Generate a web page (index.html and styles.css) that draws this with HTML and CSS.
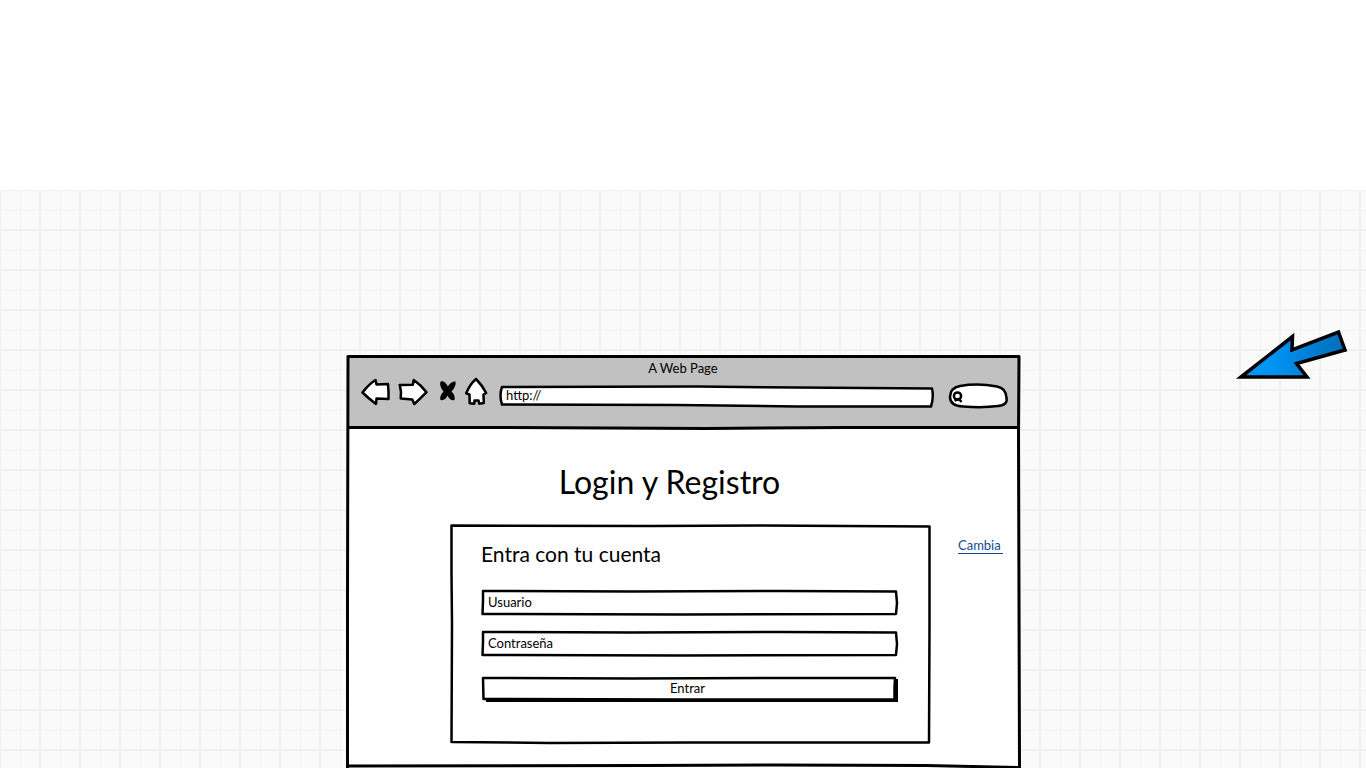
FILE: index.html
```html
<!DOCTYPE html>
<html lang="es">
<head>
<meta charset="utf-8">
<title>Login y Registro</title>
<link rel="stylesheet" href="styles.css">
</head>
<body>
<header class="top-space"></header>
<main class="canvas">
  <section class="window">
    <svg class="frame" viewBox="0 0 674 413" preserveAspectRatio="none" aria-hidden="true">
      <path fill="#fff" d="M2 2H673V413H2Z"/>
      <path fill="#c1c1c1" d="M2 2H673V73H2Z"/>
      <path class="line thick" d="M1.500 414V250L2 1.500H673L672.500 80L673.500 414M2 72.500H160L360 73.500L500 72.500H673M2 411L300 410.500L430 410L580 410.500L673 412.500"/>
    </svg>
    <div class="toolbar">
      <p class="window-title">A Web Page</p>
      <div class="controls">
        <button class="tool" type="button" aria-label="Atrás">
          <svg width="29" height="32" viewBox="0 0 29 32"><path class="shape" d="M1.500 16.500Q8 8 14.500 4L15.500 8.500L27 8L27.500 16V23L15.500 22.500L15 28Q7 22 1.500 16.500Z"/></svg>
        </button>
        <button class="tool" type="button" aria-label="Adelante">
          <svg width="30" height="32" viewBox="0 0 30 32"><path class="shape" d="M1.800 9L14.800 8.700L15.700 4Q23 9 28.500 16.200Q22 23 16.300 28L14.300 23.500L2.700 22.500L3 16Z"/></svg>
        </button>
        <button class="tool" type="button" aria-label="Detener">
          <svg width="21" height="32" viewBox="0 0 21 32"><path d="M4.500 5.500Q9 4.500 11.800 10.500Q15.500 5 19.500 5.500Q20.500 10 15.500 15.500Q19.500 19.500 18.500 24Q14.500 25.500 11.500 19.500Q9 25 4.500 24Q3 20.500 7.500 15.500Q3 10 4.500 5.500Z"/></svg>
        </button>
        <button class="tool" type="button" aria-label="Inicio">
          <svg width="24" height="32" viewBox="0 0 24 32"><path class="shape" d="M11 3Q17 9 21.200 17L18.500 18.500L18.800 27L14.300 27.700L13.500 24.500H9.500L9.300 27.700L4.700 27.300L4.500 18.500L1.200 17.300Q5 8 11 3Z"/></svg>
        </button>
        <div class="address">
          <svg class="frame" viewBox="0 0 443 32" preserveAspectRatio="none" aria-hidden="true"><path class="line" fill="#fff" d="M5 11L200 10.500L300 11.500L435 12.500Q437 21 434 30.500L300 30.500L180 29L5 28.500Q2 19 5 11Z"/></svg>
          <input class="text" type="text" value="http://" aria-label="Dirección">
        </div>
        <div class="search">
          <svg class="frame" viewBox="0 0 61 32" preserveAspectRatio="none" aria-hidden="true"><path class="line" fill="#fff" d="M2 21Q2 12 12 10Q30 7 49 10.500Q58 12 58.500 22Q60 29 50 30Q35 32 15 30.500Q2 30 2 21Z"/><circle class="line" cx="9.500" cy="20" r="3.600"/><path class="line" d="M6.500 24.500L11 23L13.500 26"/></svg>
          <input class="text" type="search" aria-label="Buscar">
        </div>
      </div>
    </div>
    <h1 class="title">Login y Registro</h1>
    <div class="content">
      <form class="card">
        <svg class="frame" viewBox="0 0 481 220" preserveAspectRatio="none" aria-hidden="true"><path class="line" d="M1.500 1.500L200 2L310 1.500L479.500 2.500V100L479 218.500L240 218.500L100 219L1.500 218L2 100L1.500 50Z"/></svg>
        <h2 class="subtitle">Entra con tu cuenta</h2>
        <div class="field">
          <svg class="frame" viewBox="0 0 417 26" preserveAspectRatio="none" aria-hidden="true"><path class="line" d="M2 2L150 2.500L300 2L415 2.500L416 14L415 25L200 25.500L1.500 25L2 12Z"/></svg>
          <input class="text" type="text" placeholder="Usuario" aria-label="Usuario">
        </div>
        <div class="field">
          <svg class="frame" viewBox="0 0 417 26" preserveAspectRatio="none" aria-hidden="true"><path class="line" d="M2 2L150 2.500L300 2L415 2.500L416 14L415 25L200 25.500L1.500 25L2 12Z"/></svg>
          <input class="text" type="password" placeholder="Contraseña" aria-label="Contraseña">
        </div>
        <button class="submit" type="submit">
          <svg class="frame" viewBox="0 0 417 26" preserveAspectRatio="none" aria-hidden="true"><path d="M5 22H413V3H417V26H5Z"/><path class="line" fill="#fff" d="M2 2L150 2.500L300 2L414 2L413.500 12V23.500L200 23.500L2.500 23Z"/></svg>
          <span class="submit-label">Entrar</span>
        </button>
      </form>
      <a class="link" href="#registro">Cambia</a>
    </div>
  </section>
  <svg class="pointer" width="112" height="52" viewBox="0 0 112 52" aria-hidden="true">
    <defs><linearGradient id="blue" x1="0" y1="0" x2="1" y2="0"><stop offset="0.3" stop-color="#0094f5"/><stop offset="1" stop-color="#006db8"/></linearGradient></defs>
    <path d="M5 49L56.500 8.500L56 22L102.500 4L109 22L60.500 35.500L71 49Z" fill="url(#blue)" stroke="#000" stroke-width="3.500"/>
  </svg>
</main>
</body>
</html>
```
FILE: styles.css
```css
* { box-sizing: border-box; }
body {
  margin: 0;
  background: #fff;
  color: #000;
  font-family: Lato, "Open Sans", sans-serif;
  font-size: 13px;
  line-height: 16px;
}
.top-space { height: 190px; }
.canvas {
  position: relative;
  overflow: hidden;
  min-height: calc(100vh - 190px);
  padding-top: 165px;
  background-color: #fafafa;
  background-image:
    linear-gradient(#f0f0f0 2px, transparent 2px),
    linear-gradient(90deg, #f0f0f0 2px, transparent 2px),
    linear-gradient(#f4f4f4 1px, transparent 1px),
    linear-gradient(90deg, #f4f4f4 1px, transparent 1px);
  background-size: 40px 40px;
  background-position: 0 -1px, -1px 0, 0 20px, 20px 0;
}
.window {
  position: relative;
  width: 100%;
  max-width: 674px;
  margin: 0 auto;
  padding-bottom: 24px;
}
.pointer {
  position: absolute;
  top: 138px;
  right: 18px;
  overflow: visible;
}
.frame {
  position: absolute;
  inset: 0;
  width: 100%;
  height: 100%;
  overflow: visible;
}
.line {
  stroke: #000;
  stroke-width: 2.5;
  stroke-linejoin: round;
  vector-effect: non-scaling-stroke;
}
.line:not([fill]) { fill: none; }
.thick { stroke-width: 3; }
.shape {
  fill: #fff;
  stroke: #000;
  stroke-width: 2.5;
  stroke-linejoin: round;
}
.toolbar {
  position: relative;
  height: 75px;
  padding: 5px 11px 0 15px;
}
.window-title { margin: 0; padding-right: 4px; text-align: center; }
.controls {
  display: flex;
  gap: 8px;
  height: 32px;
}
.tool {
  padding: 0;
  border: 0;
  background: none;
}
.tool svg { display: block; }
.address { position: relative; flex: 1; padding: 11px 12px 0 9px; }
.search { position: relative; width: 61px; padding: 12px 6px 0 18px; }
.text {
  position: relative;
  display: block;
  width: 100%;
  height: 16px;
  padding: 0;
  border: 0;
  outline: 0;
  background: none;
  color: #000;
  font: inherit;
}
.text::placeholder { color: #000; opacity: 1; }
.title {
  position: relative;
  margin: 0;
  padding: 32px 27px 22px 0;
  font-size: 32px;
  font-weight: 400;
  line-height: 40px;
  text-align: center;
}
.content {
  position: relative;
  display: grid;
  grid-template-columns: 1fr minmax(45px, auto);
  gap: 27px;
  padding: 0 17px 0 104px;
}
.card {
  position: relative;
  display: flex;
  flex-direction: column;
  gap: 15px;
  padding: 18px 33px 42px 31px;
}
.subtitle {
  position: relative;
  margin: 0 0 8px;
  font-size: 21px;
  font-weight: 400;
  line-height: 24px;
}
.field { position: relative; padding: 5px 7px; }
.submit {
  position: relative;
  height: 26px;
  margin-top: 5px;
  padding: 0 4px 3px 0;
  border: 0;
  background: none;
  color: #000;
  font: inherit;
}
.submit-label { position: relative; }
.link {
  align-self: start;
  margin-top: 13px;
  border-bottom: 1px solid #0f4c8f;
  color: #0f4c8f;
  text-decoration: none;
}
```
